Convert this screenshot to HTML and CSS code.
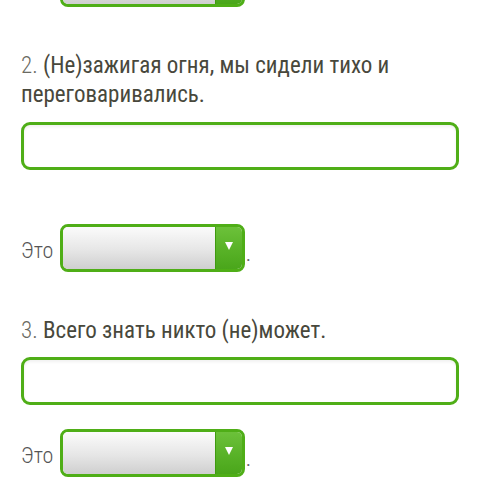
FILE: index.html
```html
<!DOCTYPE html>
<html lang="ru">
<head>
<meta charset="utf-8">
<link rel="stylesheet" href="styles.css">
</head>
<body>
<div class="page">
  <div class="row row--top">
    <div class="dropdown"><span class="dropdown-field"></span><span class="dropdown-arrow"></span></div>
  </div>

  <p class="question"><span class="num">2.</span> (Не)зажигая огня, мы сидели тихо и переговаривались.</p>
  <div class="answer"></div>
  <div class="row row--spaced">
    <span class="label">Это</span>
    <div class="dropdown"><span class="dropdown-field"></span><span class="dropdown-arrow"></span></div>
    <span class="dot">.</span>
  </div>

  <p class="question"><span class="num">3.</span> Всего знать никто (не)может.</p>
  <div class="answer answer--tight"></div>
  <div class="row">
    <span class="label">Это</span>
    <div class="dropdown"><span class="dropdown-field"></span><span class="dropdown-arrow"></span></div>
    <span class="dot">.</span>
  </div>
</div>
</body>
</html>
```
FILE: styles.css
```css
html, body {
  margin: 0;
  padding: 0;
  background: #ffffff;
  overflow: hidden;
}
.page {
  padding: 0 21px;
  font-family: Roboto, "Noto Sans", sans-serif;
  font-stretch: 85%;
}
.row {
  display: flex;
  align-items: center;
  height: 48px;
  margin-top: 24px;
}
.row--top {
  margin-top: -41px;
  padding-left: 39px;
}
.row--spaced {
  margin-top: 54px;
}
.label {
  font-size: 22px;
  font-weight: 300;
  color: #555555;
  width: 39px;
  padding-top: 4px;
}
.dot {
  font-size: 18px;
  color: #666666;
  padding-top: 12px;
  margin-left: 1px;
}
.dropdown {
  box-sizing: border-box;
  display: flex;
  width: 185px;
  height: 48px;
  border: 3px solid #4fae17;
  border-radius: 8px;
  overflow: hidden;
}
.dropdown-field {
  flex: 1;
  background: linear-gradient(to bottom, #fbfbfb 0%, #e6e6e6 55%, #cfcfcf 100%);
}
.dropdown-arrow {
  width: 26px;
  border-left: 1px solid #3f9a10;
  background: linear-gradient(to bottom, #6cc13a 0%, #58b227 55%, #4aa61b 100%);
  display: flex;
  align-items: center;
  justify-content: center;
}
.dropdown-arrow::after {
  content: "";
  display: block;
  width: 0;
  height: 0;
  border-left: 4.5px solid transparent;
  border-right: 4.5px solid transparent;
  border-top: 8px solid #ffffff;
  margin-top: -4px;
}
.question {
  margin: 44px 0 0;
  font-size: 23px;
  line-height: 29px;
  color: #48483c;
}
.num {
  font-weight: 300;
  color: #6a6a62;
}
.answer {
  box-sizing: border-box;
  margin-top: 13px;
  height: 48px;
  border: 3px solid #4fae17;
  border-radius: 9px;
  background: #ffffff;
  box-shadow: inset 0 2px 3px rgba(0, 0, 0, 0.06);
}
.answer--tight {
  margin-top: 12px;
}
```
